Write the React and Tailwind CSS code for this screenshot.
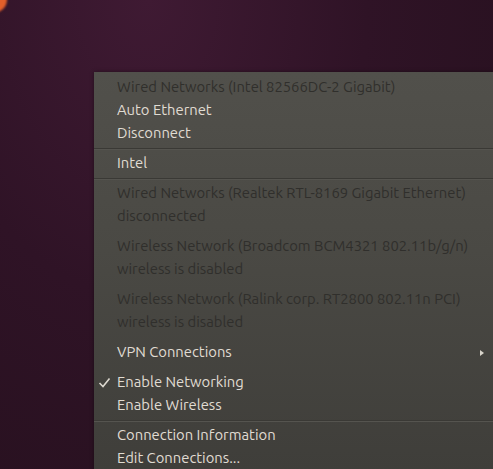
const rows = [
  { type: 'item', label: 'Wired Networks (Intel 82566DC-2 Gigabit)', disabled: true },
  { type: 'item', label: 'Auto Ethernet' },
  { type: 'item', label: 'Disconnect' },
  { type: 'sep' },
  { type: 'item', label: 'Intel' },
  { type: 'sep' },
  { type: 'item', label: 'Wired Networks (Realtek RTL-8169 Gigabit Ethernet)', disabled: true },
  { type: 'item', label: 'disconnected', disabled: true },
  { type: 'sep', faint: true },
  { type: 'item', label: 'Wireless Network (Broadcom BCM4321 802.11b/g/n)', disabled: true },
  { type: 'item', label: 'wireless is disabled', disabled: true },
  { type: 'sep', faint: true },
  { type: 'item', label: 'Wireless Network (Ralink corp. RT2800 802.11n PCI)', disabled: true },
  { type: 'item', label: 'wireless is disabled', disabled: true },
  { type: 'sep', faint: true },
  { type: 'item', label: 'VPN Connections', submenu: true },
  { type: 'sep', faint: true },
  { type: 'item', label: 'Enable Networking', checked: true },
  { type: 'item', label: 'Enable Wireless' },
  { type: 'sep' },
  { type: 'item', label: 'Connection Information' },
  { type: 'item', label: 'Edit Connections...' },
]

function Separator({ faint }) {
  return (
    <div className="flex h-[7px] flex-col justify-center">
      <div className={faint ? 'h-px bg-transparent' : 'h-px bg-[#3a3935]'} />
      <div className={faint ? 'h-px bg-transparent' : 'h-px bg-[#55544f]'} />
    </div>
  )
}

function MenuItem({ label, disabled, checked, submenu }) {
  return (
    <div className="relative flex h-[23px] items-center pl-[23px] pr-2">
      {checked && (
        <svg className="absolute left-[4px] top-[6px]" width="13" height="11" viewBox="0 0 13 11">
          <path d="M1.5 6 L5 9.5 L11.5 1.5" fill="none" stroke="#dcd8cf" strokeWidth="1.6" />
        </svg>
      )}
      <span className={disabled ? 'whitespace-nowrap text-[#302f2c]' : 'whitespace-nowrap text-[#e0dcd3]'}>{label}</span>
      {submenu && (
        <svg className="absolute left-[386px] top-[9px]" width="4" height="6" viewBox="0 0 4 6">
          <path d="M0 0 L4 3 L0 6 Z" fill="#d8d4cb" />
        </svg>
      )}
    </div>
  )
}

export default function App() {
  return (
    <div className="relative h-[469px] w-[493px] overflow-hidden bg-[radial-gradient(ellipse_at_30%_0%,#3f1a33_0%,#2f1326_45%,#25101d_100%)] font-['Ubuntu','Noto_Sans',sans-serif] text-[14.8px]">
      <div className="absolute -left-[22px] -top-[14px] h-[27px] w-[29px] rounded-full bg-[#e25f2a] blur-[1px]" />
      <div className="ml-[94px] pt-[72px]">
        <div className="w-[420px] bg-[linear-gradient(180deg,#51504b_0%,#4a4944_45%,#3f3e3a_100%)] pt-[4px] shadow-[0_0_4px_rgba(0,0,0,0.4)]">
          {rows.map((r, i) =>
            r.type === 'sep' ? <Separator key={i} faint={r.faint} /> : <MenuItem key={i} {...r} />
          )}
        </div>
      </div>
    </div>
  )
}
